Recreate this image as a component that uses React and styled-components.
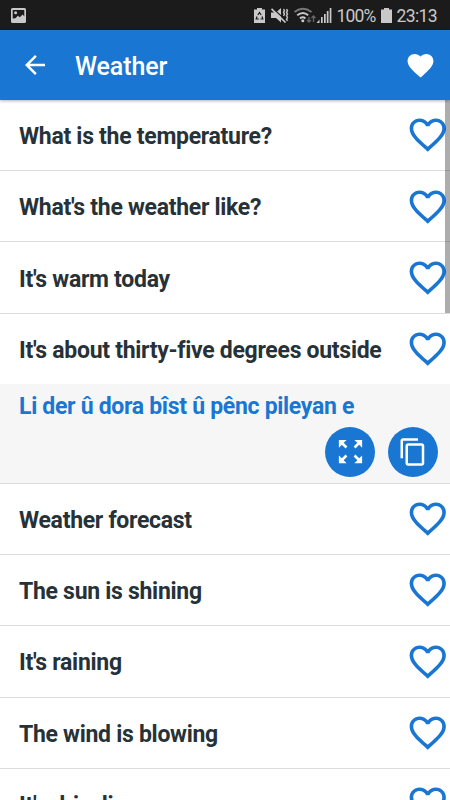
import React from 'react';
import styled, { createGlobalStyle } from 'styled-components';
import {
  MdArrowBack,
  MdContentCopy,
  MdFavorite,
  MdFavoriteBorder,
  MdZoomOutMap,
} from 'react-icons/md';

const phrases = [
  { id: 1, text: 'What is the temperature?' },
  { id: 2, text: "What's the weather like?" },
  { id: 3, text: "It's warm today" },
  {
    id: 4,
    text: "It's about thirty-five degrees outside",
    translation: 'Li der û dora bîst û pênc pileyan e',
  },
  { id: 5, text: 'Weather forecast' },
  { id: 6, text: 'The sun is shining' },
  { id: 7, text: "It's raining" },
  { id: 8, text: 'The wind is blowing' },
  { id: 9, text: "It's drizzling" },
];

const StatusIcons = () => (
  <svg width='80' height='20' viewBox='0 0 80 20' fill='#c9c9c9'>
    {/* battery saver */}
    <path d='M2 4.500h3V3h5v1.500h3V18H2z' />
    <path
      d='M5.800 10l1.700-2.500L9.200 10M10 11.500l.8 2.500H8.500M6.800 14H4.200l.8-2.500'
      fill='none'
      stroke='#1b1b1b'
      strokeWidth='1.200'
    />
    {/* vibrate */}
    <path d='M19 7.500h5l5-4.500v14.500l-5-4.500h-5z' />
    <path d='M21 3.500L35 16.500' stroke='#1b1b1b' strokeWidth='1.200' />
    <path d='M19.500 3.800L33.500 17.500' stroke='#c9c9c9' strokeWidth='1.700' />
    <path
      d='M31.500 4l1 1.700-1 1.700 1 1.700-1 1.700M34.500 4l1 1.700-1 1.700 1 1.700-1 1.700 1 1.700-1 1.700 1 1.700'
      fill='none'
      stroke='#c9c9c9'
      strokeWidth='1.400'
    />
    {/* wifi */}
    <g fill='none' strokeWidth='1.900'>
      <path d='M42.500 7q8.500-6.500 17 0' stroke='#777' />
      <path d='M45.200 10.300q5.800-4.600 11 0M48 13.500q2.700-2.400 5.400 0' stroke='#c9c9c9' />
    </g>
    <circle cx='50.800' cy='15.800' r='1.500' />
    <path
      d='M57 12v5M55 15l2 2 2-2M61.500 17v-6M59.500 13l2-2 2 2'
      fill='none'
      stroke='#686868'
      strokeWidth='1.300'
    />
    {/* signal */}
    <path d='M67.500 14.500V18H64.500zM69 12h1.700v6H69zM72 9h1.700v9H72zM74.800 6h1.700v12h-1.700zM77.700 3h1.700v15h-1.700z' />
  </svg>
);

const App = () => {
  return (
    <>
      <GlobalStyle />
      <Screen>
        <StatusBar>
          <svg width='15' height='15' viewBox='0 0 15 15'>
            <rect width='15' height='15' rx='1.500' fill='#c9c9c9' />
            <path
              d='M1.700 2h11.600v6.500l-1.600-2-2.900 2.800-2-1.500-2.300 2.400-2.800.3z'
              fill='#1b1b1b'
            />
            <circle cx='4.600' cy='4.800' r='1.500' fill='#c9c9c9' />
          </svg>
          <StatusInfo>
            <StatusIcons />
            <Percent>100%</Percent>
            <svg width='11' height='15' viewBox='0 0 11 15'>
              <path d='M3 0h5v1.500h3V15H0V1.500h3z' fill='#c9c9c9' />
            </svg>
            <Clock>23:13</Clock>
          </StatusInfo>
        </StatusBar>
        <Header>
          <MdArrowBack size={30} />
          <Title>Weather</Title>
          <MdFavorite size={31} />
        </Header>
        <List>
          {phrases.map(({ id, text, translation }) => (
            <Item key={id}>
              <Phrase>
                <span>{text}</span>
                <MdFavoriteBorder size={43.5} />
              </Phrase>
              {translation && (
                <Translation>
                  <p>{translation}</p>
                  <Actions>
                    <RoundButton>
                      <MdZoomOutMap size={31} />
                    </RoundButton>
                    <RoundButton>
                      <MdContentCopy size={30} />
                    </RoundButton>
                  </Actions>
                </Translation>
              )}
            </Item>
          ))}
          <ScrollThumb />
        </List>
      </Screen>
    </>
  );
};

const GlobalStyle = createGlobalStyle`
  * {
    box-sizing: border-box;
  }
  body {
    margin: 0;
    font-family: Roboto, sans-serif;
  }
  p {
    margin: 0;
  }
  svg {
    display: block;
    flex-shrink: 0;
  }
`;

const Screen = styled.div`
  display: flex;
  flex-direction: column;
  width: 450px;
  height: 800px;
  overflow: hidden;
  background-color: #fff;
`;

const StatusBar = styled.div`
  display: flex;
  flex-shrink: 0;
  align-items: center;
  justify-content: space-between;
  height: 30px;
  padding: 0 12.5px 0 11px;
  background-color: #1b1b1b;
  color: #c9c9c9;
`;

const StatusInfo = styled.div`
  display: flex;
  align-items: center;
  line-height: 30px;
  white-space: nowrap;
`;

const Percent = styled.span`
  width: 39px;
  margin: 2px 5px 0 5px;
  font-size: 17.5px;
  letter-spacing: -0.8px;
`;

const Clock = styled.span`
  width: 41px;
  margin: 2px 0 0 5px;
  font-size: 17.5px;
  letter-spacing: -0.6px;
`;

const Header = styled.header`
  position: relative;
  z-index: 1;
  display: flex;
  flex-shrink: 0;
  align-items: center;
  height: 70px;
  padding: 0 14.5px 0 20px;
  background-color: #1976d2;
  box-shadow: 0 1px 3px rgba(0, 0, 0, 0.3);
  color: #fff;
`;

const Title = styled.h1`
  flex: 1;
  margin: 2px 0 0 25px;
  font-size: 25px;
  font-weight: 500;
  letter-spacing: -0.1px;
`;

const List = styled.div`
  position: relative;
  flex: 1;
  overflow: hidden;
`;

const Item = styled.div`
  border-bottom: 1px solid #dcdcdc;
`;

const Phrase = styled.div`
  display: flex;
  align-items: center;
  justify-content: space-between;
  height: 70.22px;
  padding: 0 0.3px 0 19px;
  color: #263238;
  font-size: 23px;
  font-weight: 700;
  letter-spacing: -0.29px;
  white-space: nowrap;
  span {
    padding-top: 3px;
  }
  svg {
    color: #1976d2;
  }
`;

const Translation = styled.div`
  height: 99px;
  padding: 9.5px 12.5px 0 19px;
  background-color: #f6f6f6;
  color: #1976d2;
  font-size: 23px;
  font-weight: 700;
  letter-spacing: -0.3px;
  line-height: 27px;
`;

const Actions = styled.div`
  display: flex;
  justify-content: flex-end;
  gap: 12.5px;
  margin-top: 6.5px;
`;

const RoundButton = styled.button`
  display: flex;
  align-items: center;
  justify-content: center;
  width: 50px;
  height: 50px;
  padding: 0;
  border: none;
  border-radius: 50%;
  background-color: #1976d2;
  color: #fff;
`;

// stays over the hearts on the right edge
const ScrollThumb = styled.div`
  position: absolute;
  top: 0;
  right: 0;
  width: 5px;
  height: 213px;
  background-color: rgba(0, 0, 0, 0.32);
`;

export default App;
